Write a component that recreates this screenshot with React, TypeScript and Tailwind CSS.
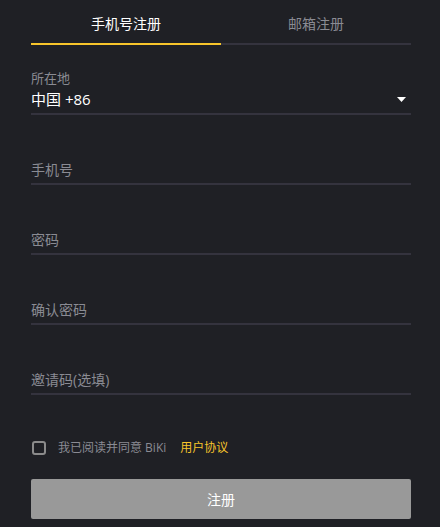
import React, { useState } from 'react';

const fields = ['手机号', '密码', '确认密码', '邀请码(选填)'];

export default function App() {
  const [tab, setTab] = useState(0);
  const [agree, setAgree] = useState(false);

  return (
    <div
      className="min-h-[527px] w-full bg-[#1f2025] pl-[31px] pr-[29px] pt-[14px]"
      style={{ fontFamily: '"Open Sans", "Noto Sans CJK SC", sans-serif' }}
    >
      {/* tabs */}
      <div className="flex">
        {['手机号注册', '邮箱注册'].map((t, i) => (
          <button
            key={t}
            type="button"
            onClick={() => setTab(i)}
            className={`flex-1 h-[31px] text-[14px] leading-[20px] pb-[9px] border-b-2 ${
              tab === i ? 'text-white border-[#f7c52b]' : 'text-[#8a8b93] border-[#34333e]'
            }`}
          >
            {t}
          </button>
        ))}
      </div>

      {/* country */}
      <div className="mt-[24px]">
        <div className="text-[13px] leading-[18px] text-[#8a8b93]">所在地</div>
        <div className="flex items-start justify-between h-[28px] border-b-2 border-[#34333e]">
          <span className="text-[15px] leading-[20px] text-white pt-[2px]">中国 +86</span>
          <svg width="9" height="5" viewBox="0 0 9 5" className="mr-[5px] mt-[10px]">
            <path d="M0 0h9L4.5 5z" fill="#fff" />
          </svg>
        </div>
      </div>

      {fields.map((f) => (
        <div key={f} className="mt-[44px] h-[26px] flex items-center border-b-2 border-[#34333e]">
          <span className="text-[14px] leading-[20px] text-[#8a8b93] -mt-[3px]">{f}</span>
        </div>
      ))}

      {/* agreement */}
      <div className="mt-[45px] flex items-center h-[16px]">
        <button
          type="button"
          onClick={() => setAgree(!agree)}
          className="w-[14px] h-[14px] ml-[1px] rounded-[3px] border-2 border-[#8b8b8b]"
        />
        <span className="ml-[12px] text-[12px] text-[#8a8b93]">我已阅读并同意 BiKi</span>
        <span className="ml-[14px] text-[12px] text-[#f7c52b]">用户协议</span>
      </div>

      <button
        type="button"
        className="mt-[23px] w-full h-[40px] rounded-[2px] bg-[#999999] text-white text-[14px]"
      >
        注册
      </button>
    </div>
  );
}
